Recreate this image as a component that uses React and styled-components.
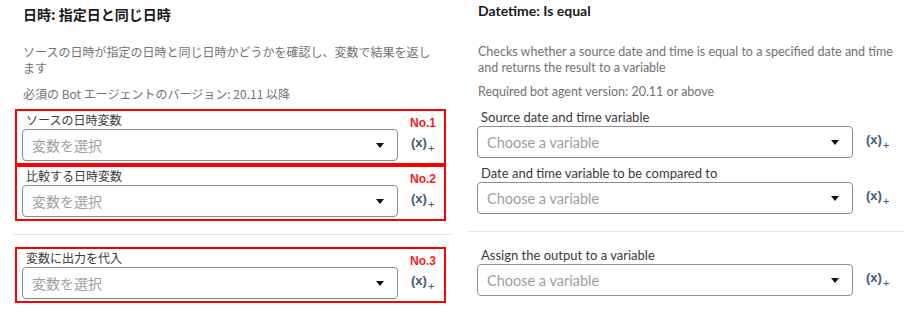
import React from "react";
import styled, { createGlobalStyle, css } from "styled-components";

const Global = createGlobalStyle`
  html, body { margin: 0; padding: 0; background: #ffffff; }
  body { width: 913px; height: 312px; overflow: hidden; }
`;

const Page = styled.div`
  display: flex;
  width: 913px;
  height: 312px;
  background: #fff;
`;

const Column = styled.section`
  box-sizing: border-box;
  display: flex;
  flex-direction: column;
  align-items: flex-start;
  ${(p) =>
    p.$lang === "ja"
      ? css`
          width: 456px;
          padding: 4px 4px 0 13px;
          font-family: "Noto Sans CJK JP", "Noto Sans", sans-serif;
        `
      : css`
          width: 457px;
          padding: 1px 8px 0 12px;
          font-family: Lato, "Noto Sans", sans-serif;
        `}
`;

const Title = styled.h1`
  margin: 0 0 0 10px;
  font-size: 14px;
  line-height: 20px;
  font-weight: 700;
  color: #1a1a1a;
  white-space: nowrap;
`;

const Description = styled.p`
  margin: ${(p) => (p.$lang === "ja" ? "20px" : "23px")} 0 0 10px;
  font-size: ${(p) => (p.$lang === "ja" ? "12px" : "12.5px")};
  line-height: 16px;
  color: #727272;
  white-space: nowrap;
`;

const Version = styled.p`
  margin: ${(p) => (p.$lang === "ja" ? "10px" : "8px")} 0 0 10px;
  font-size: ${(p) => (p.$lang === "ja" ? "12px" : "12.5px")};
  line-height: 16px;
  color: #727272;
  white-space: nowrap;
`;

const Fields = styled.div`
  display: flex;
  flex-direction: column;
  margin-top: ${(p) => (p.$lang === "ja" ? "7px" : "6px")};
`;

const FieldBox = styled.div`
  position: relative;
  box-sizing: border-box;
  width: 431px;
  margin-left: 2px;
  border: 2px solid ${(p) => (p.$marked ? "#ff0000" : "transparent")};
  padding: ${(p) => (p.$tight ? "0 5px 2px" : "0 5px 2px")};
`;

const Label = styled.div`
  height: 18px;
  line-height: 18px;
  padding-left: 4px;
  font-size: ${(p) => (p.$lang === "ja" ? "12px" : "13px")};
  color: #3a3a3a;
  white-space: nowrap;
`;

const Row = styled.div`
  display: flex;
  align-items: center;
  gap: 13px;
`;

const Select = styled.div`
  box-sizing: border-box;
  display: flex;
  align-items: center;
  justify-content: space-between;
  width: 376px;
  height: 32px;
  padding: 0 13px 0 9px;
  border: 1px solid #8c8c8c;
  border-radius: 4px;
  background: #fff;
`;

const Placeholder = styled.span`
  font-size: ${(p) => (p.$lang === "ja" ? "14px" : "14.5px")};
  color: #9e9e9e;
  white-space: nowrap;
`;

const Caret = styled.svg`
  width: 8px;
  height: 5px;
  display: block;
`;

const VarButton = styled.span`
  position: relative;
  display: inline-block;
  width: 26px;
  height: 18px;
  font-family: "Liberation Sans", Arial, sans-serif;
  font-size: 13px;
  font-weight: 700;
  line-height: 14px;
  color: #41597d;
`;

const Plus = styled.span`
  position: absolute;
  left: 17px;
  top: 7px;
  font-size: 11px;
  font-weight: 400;
  line-height: 11px;
`;

const Badge = styled.span`
  position: absolute;
  right: 8px;
  top: 5px;
  font-family: "Liberation Sans", Arial, sans-serif;
  font-size: 12px;
  font-weight: 700;
  line-height: 14px;
  color: #ff1a1a;
`;

const Divider = styled.hr`
  align-self: stretch;
  margin: 13px 0 0;
  border: 0;
  border-top: 1px solid #e6e6e6;
  height: 0;
`;

const Output = styled.div`
  margin-top: 12px;
`;

function Field({ lang, label, placeholder, badge, tight }) {
  return (
    <FieldBox $marked={!!badge} $tight={tight}>
      <Label $lang={lang}>{label}</Label>
      <Row>
        <Select>
          <Placeholder $lang={lang}>{placeholder}</Placeholder>
          <Caret viewBox="0 0 8 5">
            <polygon points="0,0 8,0 4,5" fill="#111" />
          </Caret>
        </Select>
        <VarButton>
          (x)<Plus>+</Plus>
        </VarButton>
      </Row>
      {badge && <Badge>{badge}</Badge>}
    </FieldBox>
  );
}

const content = {
  ja: {
    title: "日時: 指定日と同じ日時",
    desc: ["ソースの日時が指定の日時と同じ日時かどうかを確認し、変数で結果を返し", "ます"],
    version: "必須の Bot エージェントのバージョン: 20.11 以降",
    fields: ["ソースの日時変数", "比較する日時変数", "変数に出力を代入"],
    placeholder: "変数を選択",
    badges: ["No.1", "No.2", "No.3"],
  },
  en: {
    title: "Datetime: Is equal",
    desc: [
      "Checks whether a source date and time is equal to a specified date and time",
      "and returns the result to a variable",
    ],
    version: "Required bot agent version: 20.11 or above",
    fields: [
      "Source date and time variable",
      "Date and time variable to be compared to",
      "Assign the output to a variable",
    ],
    placeholder: "Choose a variable",
    badges: [null, null, null],
  },
};

function Panel({ lang }) {
  const c = content[lang];
  return (
    <Column $lang={lang}>
      <Title>{c.title}</Title>
      <Description $lang={lang}>
        {c.desc[0]}
        <br />
        {c.desc[1]}
      </Description>
      <Version $lang={lang}>{c.version}</Version>
      <Fields $lang={lang}>
        <Field lang={lang} label={c.fields[0]} placeholder={c.placeholder} badge={c.badges[0]} />
        <Field lang={lang} label={c.fields[1]} placeholder={c.placeholder} badge={c.badges[1]} />
      </Fields>
      <Divider />
      <Output>
        <Field lang={lang} label={c.fields[2]} placeholder={c.placeholder} badge={c.badges[2]} tight />
      </Output>
    </Column>
  );
}

export default function App() {
  return (
    <>
      <Global />
      <Page>
        <Panel lang="ja" />
        <Panel lang="en" />
      </Page>
    </>
  );
}
